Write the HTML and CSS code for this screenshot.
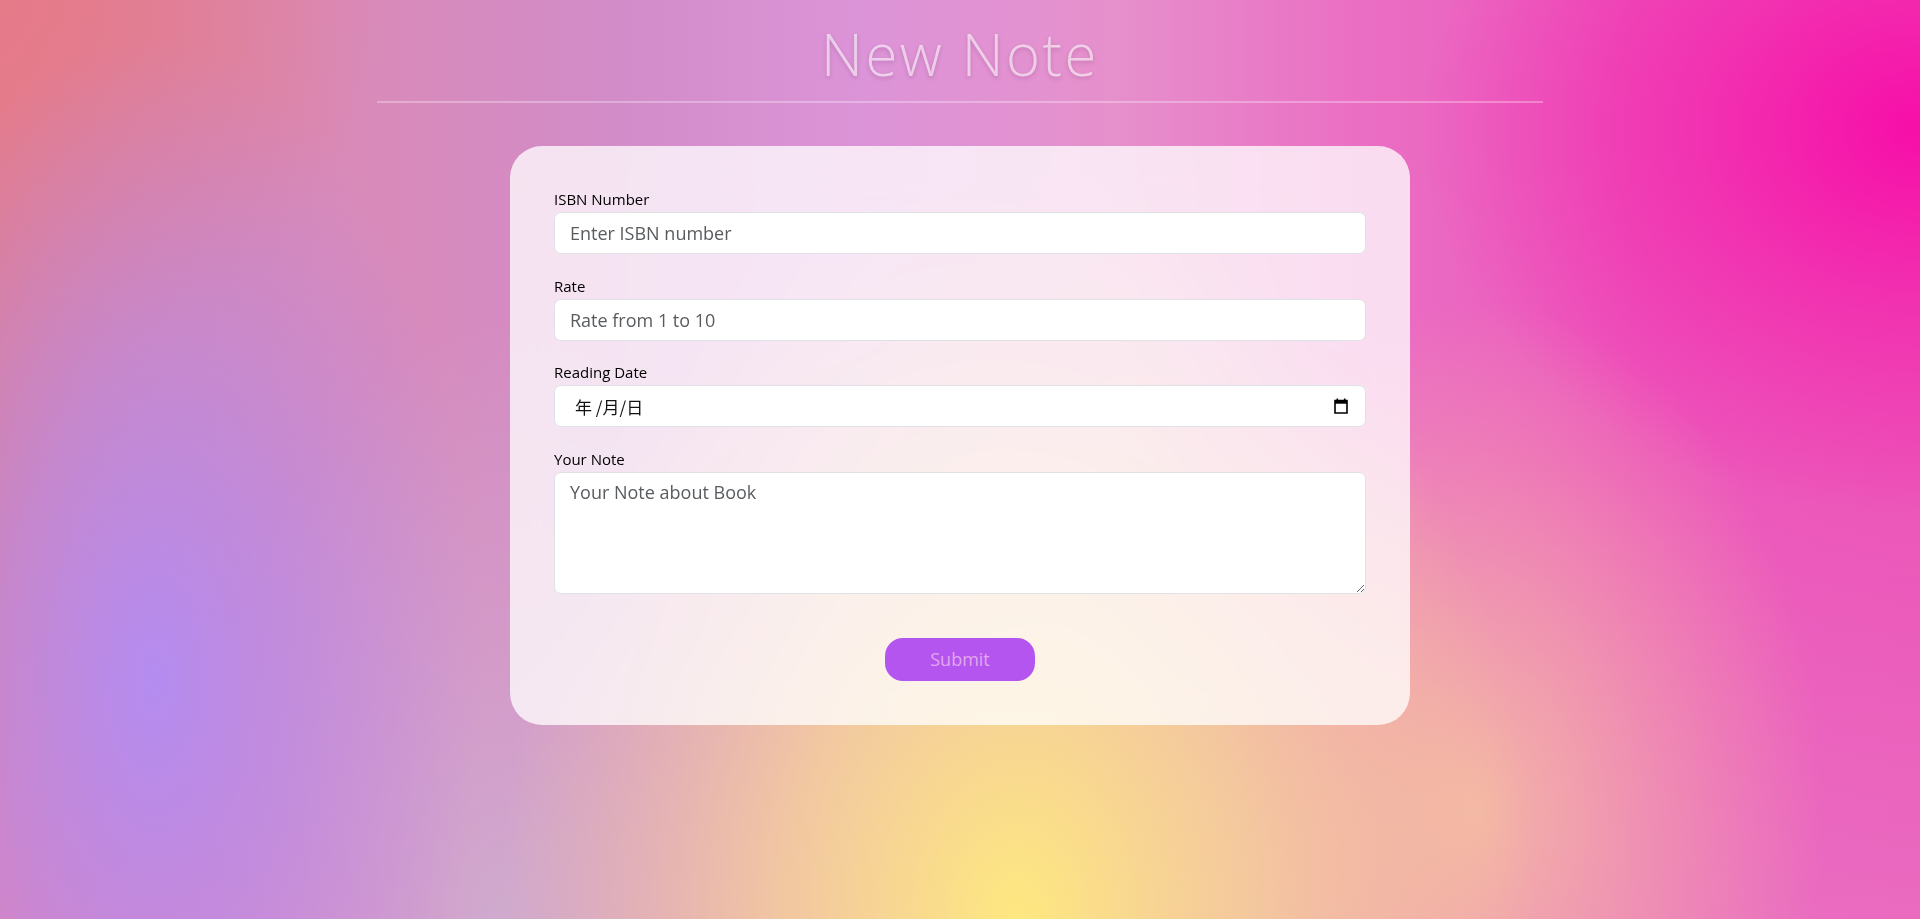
FILE: index.html
```html
<!DOCTYPE html>
<html lang="zh-CN">
<head>
<meta charset="utf-8">
<title>New Note</title>
<link rel="stylesheet" href="styles.css">
</head>
<body>
<main class="page">
  <header class="page-head">
    <h1 class="title">New Note</h1>
    <hr class="rule">
  </header>
  <form class="card">
    <div class="fields">
      <div class="group">
        <label class="label" for="isbn">ISBN Number</label>
        <input class="control" id="isbn" type="text" placeholder="Enter ISBN number">
      </div>
      <div class="group">
        <label class="label" for="rate">Rate</label>
        <input class="control" id="rate" type="text" placeholder="Rate from 1 to 10">
      </div>
      <div class="group">
        <label class="label" for="date">Reading Date</label>
        <div class="control date-field" id="date">
          <span class="date-text">年 /月/日</span>
          <svg class="cal-icon" width="14" height="16" viewBox="0 0 14 16" aria-hidden="true">
            <rect x="2.5" y="0.5" width="1.6" height="3" fill="#000"/>
            <rect x="9.9" y="0.5" width="1.6" height="3" fill="#000"/>
            <path d="M1 2.5h12v12.5H1z" fill="none" stroke="#000" stroke-width="1.6"/>
            <rect x="1" y="2.5" width="12" height="3.2" fill="#000"/>
          </svg>
        </div>
      </div>
      <div class="group">
        <label class="label" for="note">Your Note</label>
        <textarea class="control note" id="note" placeholder="Your Note about Book"></textarea>
      </div>
    </div>
    <div class="actions">
      <button class="submit" type="submit">Submit</button>
    </div>
  </form>
</main>
</body>
</html>
```
FILE: styles.css
```css
* { box-sizing: border-box; }
html, body { height: 100%; }
body {
  margin: 0;
  min-height: 919px;
  font-family: "Open Sans", "Noto Sans", "Liberation Sans", sans-serif;
  color: #212529;
  background-color: #dc8cc8;
  background-image:
    radial-gradient(ellipse 27% 80% at 53% 100%, rgba(254, 232, 128, 1) 0%, rgba(246, 214, 150, 0.8) 45%, rgba(240, 200, 170, 0) 100%),
    radial-gradient(ellipse 17% 70% at 8% 74%, rgba(180, 140, 240, 1) 0%, rgba(180, 140, 240, 0.6) 45%, rgba(180, 140, 240, 0) 100%),
    radial-gradient(ellipse 16% 65% at 26% 100%, rgba(204, 176, 208, 0.85) 0%, rgba(204, 176, 208, 0.4) 50%, rgba(204, 176, 208, 0) 100%),
    radial-gradient(ellipse 18% 55% at 77% 88%, rgba(244, 184, 164, 0.95) 0%, rgba(244, 184, 164, 0) 100%),
    radial-gradient(ellipse 26% 42% at 100% 14%, rgba(247, 14, 168, 1) 0%, rgba(247, 14, 168, 0.5) 45%, rgba(247, 14, 168, 0) 100%),
    radial-gradient(ellipse 20% 40% at 0% 0%, rgba(230, 122, 136, 0.9) 0%, rgba(230, 122, 136, 0) 100%),
    linear-gradient(to bottom, rgba(232, 120, 200, 0) 50%, rgba(232, 130, 200, 0.5) 100%),
    linear-gradient(to right, #e07e92 0%, #d98ab8 18%, #d28cc8 32%, #dc94d8 45%, #e690cc 58%, #ea70c4 70%, #ec58bc 85%, #ec54b8 100%);
}
.page {
  display: flex;
  flex-direction: column;
  align-items: center;
}
.page-head {
  display: flex;
  flex-direction: column;
  align-items: center;
  padding-top: 14px;
}
.title {
  margin: 0;
  font-family: "Open Sans", "Noto Sans", sans-serif;
  font-weight: 300;
  font-size: 58px;
  line-height: 80px;
  letter-spacing: 2.5px;
  color: rgba(255, 255, 255, 0.6);
  text-shadow: 0 2px 4px rgba(80, 0, 60, 0.18);
}
.rule {
  width: 1166px;
  margin: 7px 0 0 0;
  border: 0;
  height: 2px;
  background: rgba(255, 255, 255, 0.3);
}
.card {
  margin-top: 43px;
  width: 900px;
  padding: 44px;
  border-radius: 32px;
  background: rgba(255, 255, 255, 0.76);
  backdrop-filter: blur(20px);
  display: flex;
  flex-direction: column;
  gap: 44px;
}
.fields {
  display: flex;
  flex-direction: column;
  gap: 22.5px;
}
.group {
  display: flex;
  flex-direction: column;
}
.label {
  display: block;
  font-size: 15px;
  line-height: 18px;
  padding-bottom: 4px;
  color: #000;
}
.control {
  display: block;
  width: 100%;
  height: 42px;
  padding: 0 15px;
  font-family: "Open Sans", "Noto Sans", sans-serif;
  font-size: 18px;
  color: #212529;
  background: #fff;
  border: 1px solid #dee2e6;
  border-radius: 7px;
  outline: none;
}
.control::placeholder { color: #595c5f; }
.date-field {
  display: flex;
  align-items: center;
  justify-content: space-between;
  padding: 0 17px 0 20px;
}
.date-text {
  font-family: "Noto Sans CJK SC", "Noto Sans", sans-serif;
  font-size: 17px;
  color: #111;
}
.cal-icon { display: block; }
.note {
  height: 122px;
  padding: 6px 15px;
  resize: vertical;
  line-height: 26px;
}
.actions {
  display: flex;
  justify-content: center;
}
.submit {
  width: 150px;
  height: 43px;
  border: 0;
  border-radius: 18px;
  background: #b355ee;
  color: #e4a6ee;
  font-family: "Open Sans", "Noto Sans", sans-serif;
  font-size: 18px;
  cursor: pointer;
}
```
